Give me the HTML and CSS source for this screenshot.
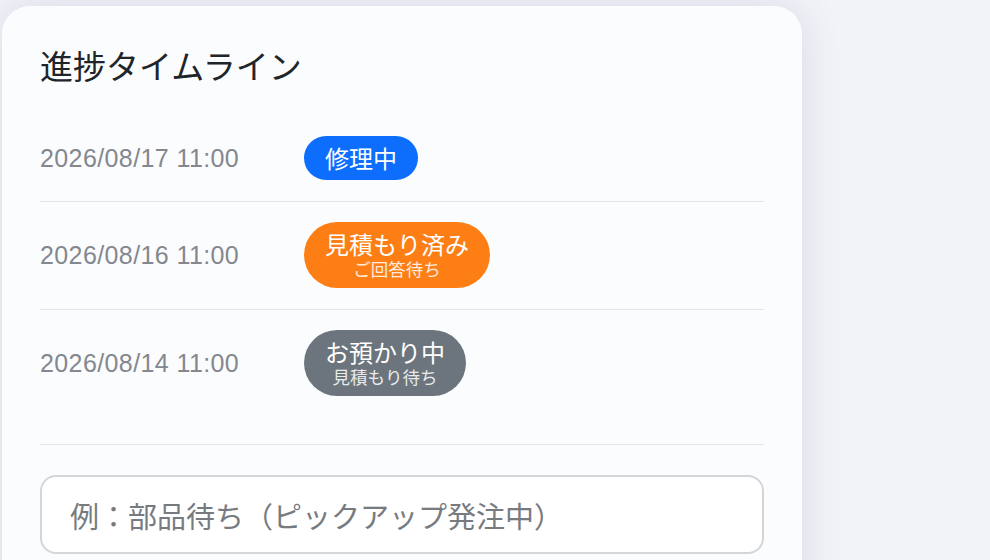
FILE: index.html
```html
<!DOCTYPE html>
<html lang="ja">
<head>
    <meta charset="UTF-8">
    <meta name="viewport" content="width=device-width, initial-scale=1.0">
    <title>進捗タイムライン</title>
    <link rel="stylesheet" href="styles.css">
</head>
<body>

<div class="card">
    <h2 class="card-title">進捗タイムライン</h2>

    <ul class="timeline">
        <li class="timeline-row">
            <span class="timeline-date">2026/08/17 11:00</span>
            <span class="badge badge-blue">
                <span class="badge-main">修理中</span>
            </span>
        </li>
        <li class="timeline-row">
            <span class="timeline-date">2026/08/16 11:00</span>
            <span class="badge badge-orange">
                <span class="badge-main">見積もり済み</span>
                <span class="badge-sub">ご回答待ち</span>
            </span>
        </li>
        <li class="timeline-row">
            <span class="timeline-date">2026/08/14 11:00</span>
            <span class="badge badge-gray">
                <span class="badge-main">お預かり中</span>
                <span class="badge-sub">見積もり待ち</span>
            </span>
        </li>
    </ul>

    <div class="note-form">
        <input class="note-input" type="text" placeholder="例：部品待ち（ピックアップ発注中）">
    </div>
</div>

</body>
</html>
```

FILE: styles.css
```css
html, body {
    height: 100%;
}
body {
    margin: 0;
    padding: 6px 0 0 2px;
    box-sizing: border-box;
    overflow: hidden;
    background-color: #f2f3f7;
    font-family: "Noto Sans CJK JP", "Noto Sans", sans-serif;
    color: #212529;
}
.card {
    width: 800px;
    box-sizing: border-box;
    padding: 40px 38px 60px;
    background-color: #fbfcfe;
    border-radius: 28px 28px 0 0;
    box-shadow: 0 0 40px rgba(70, 80, 140, 0.14);
}
.card-title {
    margin: 0 0 32px;
    font-size: 33px;
    font-weight: 400;
    line-height: 38px;
}
.timeline {
    list-style: none;
    margin: 0;
    padding: 0 0 27px;
    border-bottom: 1px solid #e3e4e8;
}
.timeline-row {
    display: flex;
    align-items: center;
    padding: 20px 0 21px;
    border-bottom: 1px solid #e3e4e8;
}
.timeline-row:last-child {
    border-bottom: none;
}
.timeline-date {
    width: 264px;
    flex-shrink: 0;
    font-family: "Liberation Sans", Arial, sans-serif;
    font-size: 25px;
    line-height: 28px;
    letter-spacing: 0.4px;
    color: #84888e;
}
.badge {
    display: inline-flex;
    flex-direction: column;
    align-items: center;
    padding: 8px 21px;
    border-radius: 999px;
    color: #fff;
}
.badge-main {
    font-size: 24px;
    line-height: 28px;
}
.badge-sub {
    font-size: 17.5px;
    line-height: 22px;
    opacity: 0.85;
}
.badge-blue {
    background-color: #0d6efd;
}
.badge-orange {
    background-color: #fd7e14;
}
.badge-gray {
    background-color: #6c757d;
}
.note-form {
    padding-top: 30px;
}
.note-input {
    display: block;
    width: 100%;
    height: 79px;
    box-sizing: border-box;
    padding: 0 28px;
    border: 2px solid #d3d5d9;
    border-radius: 16px;
    background-color: #fff;
    font-family: inherit;
    font-size: 29px;
    color: #212529;
}
.note-input::placeholder {
    color: #777b80;
}
```
